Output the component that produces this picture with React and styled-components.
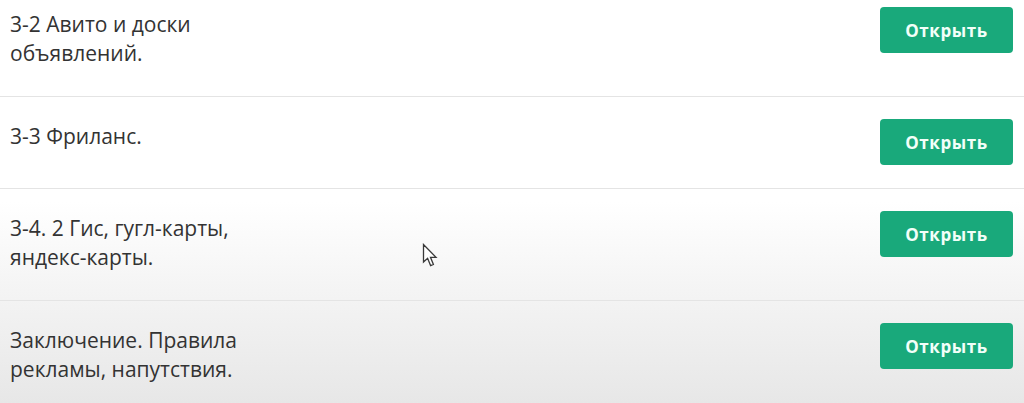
import React from "react";
import styled, { createGlobalStyle } from "styled-components";

const Global = createGlobalStyle`
  html, body { margin: 0; padding: 0; }
  body {
    width: 1024px;
    height: 403px;
    overflow: hidden;
    background: linear-gradient(180deg, #ffffff 0%, #ffffff 50%, #f4f4f4 72%, #e7e7e7 100%);
    font-family: "Open Sans", "Noto Sans", sans-serif;
  }
`;

const Page = styled.div`
  position: relative;
  width: 1024px;
  height: 403px;
  overflow: hidden;
`;

const List = styled.div`
  margin-top: -15px;
  display: flex;
  flex-direction: column;
`;

const Row = styled.div`
  display: flex;
  align-items: flex-start;
  justify-content: space-between;
  padding: 22px 11px 23px 10px;
  border-bottom: 1px solid ${(p) => (p.$last ? "transparent" : "#e4e4e4")};
`;

const Title = styled.div`
  width: 280px;
  padding: 3px 0 5px;
  font-size: 21px;
  line-height: 29px;
  color: #333333;
`;

const OpenButton = styled.button`
  width: 133px;
  height: 46px;
  border: none;
  border-radius: 4px;
  background: #19a97b;
  color: #f2fff9;
  font-family: "Open Sans", "Noto Sans", sans-serif;
  font-weight: 700;
  font-size: 17px;
  letter-spacing: 0.6px;
  cursor: pointer;
`;

const Cursor = styled.svg`
  position: absolute;
  left: 422px;
  top: 243px;
`;

const items = [
  "3-2 Авито и доски объявлений.",
  "3-3 Фриланс.",
  "3-4. 2 Гис, гугл-карты, яндекс-карты.",
  "Заключение. Правила рекламы, напутствия.",
];

export default function App() {
  return (
    <Page>
      <Global />
      <List>
        {items.map((t, i) => (
          <Row key={i} $last={i === items.length - 1}>
            <Title>{t}</Title>
            <OpenButton>Открыть</OpenButton>
          </Row>
        ))}
      </List>
      <Cursor width="18" height="26" viewBox="0 0 18 26">
        <path
          d="M1.5 1.5 L1.5 19 L5.6 15.3 L8.6 22.6 L11.4 21.4 L8.5 14.3 L14 14.3 Z"
          fill="#ffffff"
          stroke="#3a3a3a"
          strokeWidth="1.3"
          strokeLinejoin="miter"
        />
      </Cursor>
    </Page>
  );
}
